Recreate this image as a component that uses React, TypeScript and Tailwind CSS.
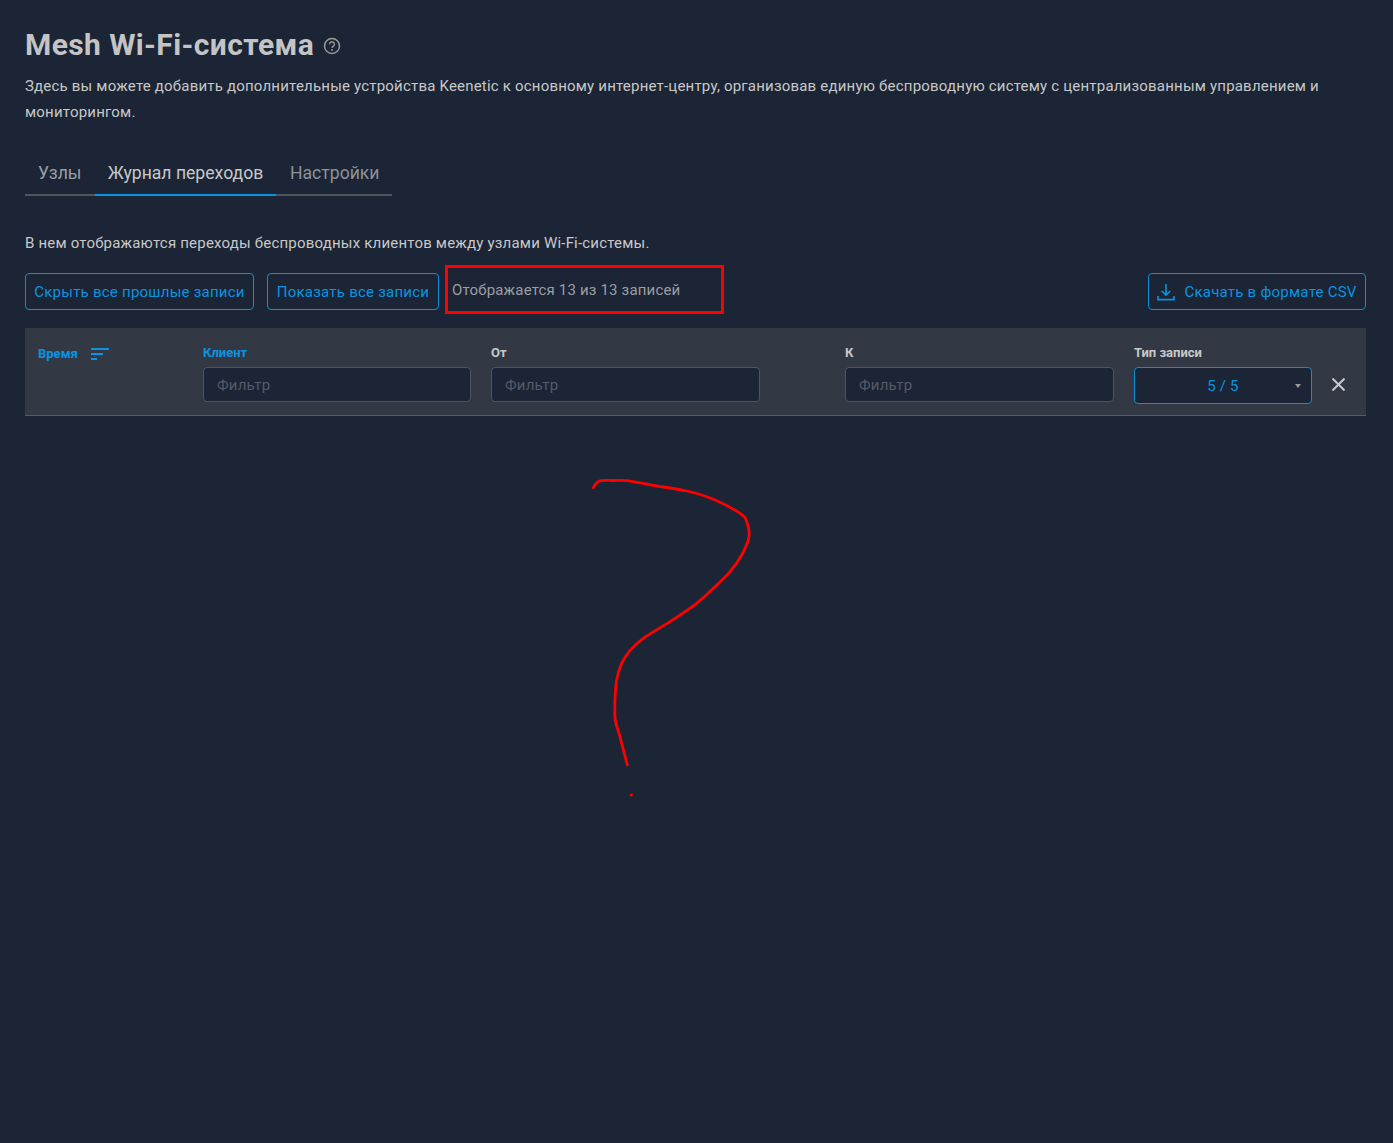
import React from "react";

const pts: [number, number][] = [
  [593.3, 487.7], [596, 483.5], [600.7, 480.7], [613, 480.5], [626.7, 480.7], [653.3, 485.3], [686.7, 491], [713.3, 499.3],
  [740, 513.3], [746.7, 521.7], [749, 536.7], [741.7, 555], [730, 571.7], [713.3, 588.3], [696.7, 603.3], [670, 621.7],
  [643.3, 638.3], [630, 650.7], [621.7, 663.3], [616.7, 680], [615, 700], [615.3, 720], [620, 736.7], [627.3, 765],
];

function smooth(p: [number, number][]) {
  let d = `M${p[0][0]} ${p[0][1]}`;
  for (let i = 0; i < p.length - 1; i++) {
    const a = p[Math.max(i - 1, 0)];
    const b = p[i];
    const c = p[i + 1];
    const e = p[Math.min(i + 2, p.length - 1)];
    d += ` C${b[0] + (c[0] - a[0]) / 6} ${b[1] + (c[1] - a[1]) / 6} ${c[0] - (e[0] - b[0]) / 6} ${c[1] - (e[1] - b[1]) / 6} ${c[0]} ${c[1]}`;
  }
  return d;
}

function Input() {
  return (
    <div className="h-[35px] rounded-[4px] border border-[#4f5560] bg-[#1b2535] pl-[13px] text-[15px] tracking-[0.2px] leading-[35px] text-[#555b66]">Фильтр</div>
  );
}

function Filter({ label }: { label: string }) {
  return (
    <div className="flex flex-col w-[269px]">
      <div className="h-[39px] pt-[17px] text-[13px] leading-[16px] font-bold text-[#c8c8c8]">{label}</div>
      <Input />
    </div>
  );
}

function Btn({ children, className = "" }: { children: React.ReactNode; className?: string }) {
  return (
    <div className={`h-[37px] pt-[1px] flex items-center justify-center rounded-[4px] border border-[#0a8fd8] text-[15px] tracking-[0.24px] text-[#0a94e0] ${className}`}>{children}</div>
  );
}

export default function App() {
  return (
    <div className="relative min-h-[1143px] bg-[#1b2535] pl-[25px] pr-[27px] pt-[24px] font-['Roboto',sans-serif] text-[#c8c8c8]">
      <div className="flex items-center h-[41px]">
        <h1 className="text-[30px] tracking-[0.4px] leading-[41px] font-bold text-[#c4c4c4]">Mesh Wi-Fi-система</h1>
        <svg className="ml-[9px] mt-[2px] w-[18px] h-[18px]" viewBox="0 0 18 18" fill="none" stroke="#9a9a9a">
          <circle cx="9" cy="9" r="7.5" strokeWidth="1.5" />
          <path d="M6.6 7.2a2.4 2.4 0 1 1 3.6 2.1c-.8.45-1.2.9-1.2 1.7" strokeWidth="1.4" />
          <circle cx="9" cy="13" r=".9" fill="#9a9a9a" stroke="none" />
        </svg>
      </div>
      <p className="mt-[8px] text-[15px] tracking-[0.2px] leading-[26px] text-[#c8c8c8]">
        Здесь вы можете добавить дополнительные устройства Keenetic к основному интернет-центру, организовав единую беспроводную систему с централизованным управлением и мониторингом.
      </p>
      <div className="mt-[25px] flex w-[367px] h-[46px] border-b-2 border-[#4f5560] text-[17.6px] leading-[46px]">
        <div className="w-[70px] pl-[13px] text-[#999da3]">Узлы</div>
        <div className="w-[181px] text-center h-[46px] border-b-2 border-[#0a94e0] text-[#c8c8c8]">Журнал переходов</div>
        <div className="w-[116px] pl-[14px] text-[#8d9198]">Настройки</div>
      </div>
      <p className="mt-[34px] text-[15px] tracking-[0.2px] leading-[26px]">В нем отображаются переходы беспроводных клиентов между узлами Wi-Fi-системы.</p>
      <div className="mt-[17px] flex items-start">
        <Btn className="w-[229px]">Скрыть все прошлые записи</Btn>
        <Btn className="ml-[13px] w-[172px]">Показать все записи</Btn>
        <div className="relative ml-[13px] text-[15px] tracking-[0.18px] leading-[34px] text-[#9b9ea3]">
          Отображается 13 из 13 записей
          <div className="absolute left-[-7px] top-[-8px] w-[279px] h-[49px] border-[3px] border-[#ff0000]" />
        </div>
        <Btn className="ml-auto w-[218px] gap-[9px]">
          <svg className="w-[18px] h-[18px]" viewBox="0 0 18 18" fill="none" stroke="#0a94e0" strokeWidth="1.6">
            <path d="M9 1v11M4.8 8 9 12.2 13.2 8" />
            <path d="M1 13v3.6h16V13" />
          </svg>
          Скачать в формате CSV
        </Btn>
      </div>
      <div className="mt-[18px] h-[88px] flex bg-[#323945] border-b border-[#555b66] pl-[13px]">
        <div className="w-[165px] pt-[18px] flex items-start text-[13px] leading-[16px] font-bold text-[#0a94e0]">
          Время
          <svg className="ml-[13px] mt-[2px] w-[18px] h-[12px]" viewBox="0 0 18 12" fill="#0a94e0">
            <rect x="0" y="0" width="18" height="2" />
            <rect x="0" y="5" width="12" height="2" />
            <rect x="0" y="10" width="6" height="2" />
          </svg>
        </div>
        <div className="w-[268px] mr-[20px]">
          <div className="h-[39px] pt-[17px] text-[13px] leading-[16px] font-bold text-[#0a94e0]">Клиент</div>
          <Input />
        </div>
        <Filter label="От" />
        <div className="w-[85px]" />
        <Filter label="К" />
        <div className="ml-[20px] w-[178px]">
          <div className="h-[39px] pt-[17px] text-[13px] leading-[16px] font-bold text-[#c8c8c8]">Тип записи</div>
          <div className="relative h-[37px] rounded-[4px] border border-[#0a8fd8] bg-[#1b2535] text-center text-[15px] tracking-[0.2px] leading-[37px] text-[#0a94e0]">
            5 / 5
            <span className="absolute right-[10px] top-[16px] border-x-[3.5px] border-t-[4px] border-x-transparent border-t-[#9a9a9a]" />
          </div>
        </div>
        <svg className="ml-[20px] mt-[50px] w-[13px] h-[13px]" viewBox="0 0 13 13" stroke="#c8c8c8" strokeWidth="2">
          <path d="M.5.5l12 12M12.5.5l-12 12" />
        </svg>
      </div>
      <svg className="absolute left-0 top-0 w-[1393px] h-[1143px] pointer-events-none" viewBox="0 0 1393 1143" fill="none">
        <path d={smooth(pts)} stroke="#ff0000" strokeWidth="2.8" strokeLinecap="round" strokeLinejoin="round" />
        <circle cx="631.3" cy="795" r="1.6" fill="#ff0000" />
      </svg>
    </div>
  );
}
